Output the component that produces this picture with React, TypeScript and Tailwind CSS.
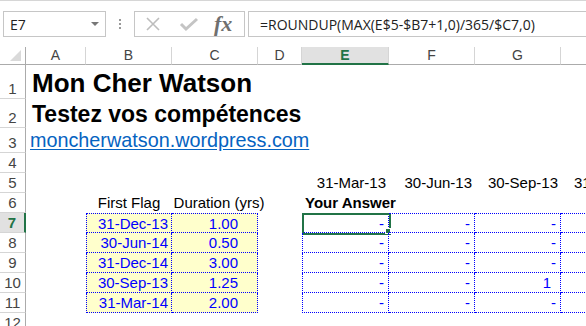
import React from "react";

const cols = ["A", "B", "C", "D", "E", "F", "G", "H"];
const rowHeights = [34, 29, 25, 20, 20, 20, 20, 20, 20, 20, 20, 20];

const flags = [
  ["31-Dec-13", "1.00"],
  ["30-Jun-14", "0.50"],
  ["31-Dec-14", "3.00"],
  ["30-Sep-13", "1.25"],
  ["31-Mar-14", "2.00"],
];

// answers E7:H11, "-" is zero in accounting format
const answers = [
  ["-", "-", "-", "-"],
  ["-", "-", "-", "-"],
  ["-", "-", "-", "-"],
  ["-", "-", "1", "-"],
  ["-", "-", "-", "-"],
];

const cell = "font-['Liberation_Sans',Arial,sans-serif] text-[15px] leading-[20px] whitespace-nowrap";

function FormulaBar() {
  return (
    <div className="flex h-[47px] items-start border-t border-[#d6d6d6] bg-white pt-[10px]">
      <div className="ml-[3px] flex h-[26px] w-[103px] items-center justify-between border border-[#c6c6c6] pl-[6px] pr-[6px] font-['Open_Sans',sans-serif] text-[14px] text-[#222]">
        <span>E7</span>
        <span className="h-0 w-0 border-x-[4px] border-t-[4px] border-x-transparent border-t-[#777]" />
      </div>
      <div className="ml-[13px] mt-[8px] flex flex-col gap-[2px]">
        <span className="h-[2px] w-[2px] bg-[#999]" />
        <span className="h-[2px] w-[2px] bg-[#999]" />
        <span className="h-[2px] w-[2px] bg-[#999]" />
      </div>
      <div className="ml-[13px] flex h-[26px] w-[111px] items-center border border-[#c6c6c6]">
        <svg width="16" height="16" viewBox="0 0 16 16" className="ml-[10px]">
          <path d="M2 2 L14 14 M14 2 L2 14" stroke="#bdbdbd" strokeWidth="1.6" fill="none" />
        </svg>
        <svg width="20" height="16" viewBox="0 0 20 16" className="ml-[18px]">
          <path d="M2 8 L7 13 L18 3" stroke="#c4c4c4" strokeWidth="3" fill="none" />
        </svg>
        <span className="ml-[15px] font-['Liberation_Serif',serif] text-[22px] font-bold italic leading-none text-[#6f6f6f]">
          fx
        </span>
      </div>
      <div className="ml-[3px] flex h-[26px] flex-1 items-center border-y border-l border-[#c6c6c6] pl-[11px] font-['Open_Sans',sans-serif] text-[14px] text-[#222]">
        =ROUNDUP(MAX(E$5-$B7+1,0)/365/$C7,0)
      </div>
    </div>
  );
}

function Sheet() {
  const rows = rowHeights.map((_, i) => i + 1);
  return (
    <div className="grid grid-cols-[26px_60px_86px_86px_44px_87px_86px_86px_86px] grid-rows-[18px_34px_29px_25px_repeat(12,20px)] bg-white">
      {/* corner */}
      <div className="relative border-b border-r border-[#ababab]">
        <span className="absolute bottom-[3px] right-[4px] h-0 w-0 border-b-[11px] border-l-[11px] border-b-[#dadada] border-l-transparent" />
      </div>
      {cols.map((c) => (
        <div
          key={c}
          className={
            "flex items-center justify-center font-['Liberation_Sans',Arial,sans-serif] text-[14px] " +
            (c === "E"
              ? "border-b-2 border-r border-b-[#217346] border-r-[#d5d5d5] bg-[#e1e1e1] font-bold text-[#217346]"
              : "border-b border-r border-b-[#ababab] border-r-[#d5d5d5] text-[#444]")
          }
        >
          {c}
        </div>
      ))}

      {rows.map((r) => (
        <React.Fragment key={r}>
          <div
            className={
              "flex items-end justify-center font-['Liberation_Sans',Arial,sans-serif] text-[15px] leading-[19px] " +
              (r === 7
                ? "border-b border-r-2 border-b-[#d5d5d5] border-r-[#217346] bg-[#e1e1e1] font-bold text-[#217346]"
                : "border-b border-r border-b-[#d5d5d5] border-r-[#ababab] text-[#444]")
            }
          >
            {r}
          </div>
          {cols.map((c) => (
            <Cell key={c + r} col={c} row={r} />
          ))}
        </React.Fragment>
      ))}
    </div>
  );
}

function Cell({ col, row }: { col: string; row: number }) {
  if (col === "A" && row === 1)
    return (
      <div className="flex items-end overflow-visible pb-[1px] pl-[6px]">
        <span className="whitespace-nowrap font-['Liberation_Sans',Arial,sans-serif] text-[26px] font-bold leading-[30px] text-black">
          Mon Cher Watson
        </span>
      </div>
    );
  if (col === "A" && row === 2)
    return (
      <div className="flex items-end overflow-visible pb-[1px] pl-[6px]">
        <span className="whitespace-nowrap font-['Liberation_Sans',Arial,sans-serif] text-[23px] font-bold leading-[26px] text-black">
          Testez vos compétences
        </span>
      </div>
    );
  if (col === "A" && row === 3)
    return (
      <div className="flex items-end overflow-visible pb-[2px] pl-[4px]">
        <span className="whitespace-nowrap font-['Liberation_Sans',Arial,sans-serif] text-[19.8px] leading-[22px] text-[#0563c1] underline underline-offset-[2px]">
          moncherwatson.wordpress.com
        </span>
      </div>
    );

  if (row === 5) {
    const dates: Record<string, string> = { E: "31-Mar-13", F: "30-Jun-13", G: "30-Sep-13", H: "31-Dec-13" };
    if (dates[col])
      return <div className={cell + " pr-[3px] text-right text-black"}>{dates[col]}</div>;
    return <div />;
  }

  if (row === 6) {
    if (col === "B") return <div className={cell + " flex justify-center text-black"}>First Flag</div>;
    if (col === "C")
      return (
        <div className={cell + " flex justify-center overflow-visible pl-[8px] text-black"}>
          <span>Duration (yrs)</span>
        </div>
      );
    if (col === "E")
      return <div className={cell + " pl-[3px] font-bold text-black"}>Your Answer</div>;
    return <div />;
  }

  if (row >= 7 && row <= 11) {
    const i = row - 7;
    const edgeT = row === 7 ? " border-t" : "";
    if (col === "B" || col === "C") {
      const val = col === "B" ? flags[i][0] : flags[i][1];
      return (
        <div
          className={
            cell +
            " border-b border-r border-dotted border-[#0000ff] bg-[#ffffcc] text-right text-[#0000ff]" +
            edgeT +
            (col === "B" ? " border-l pr-[3px]" : " pr-[19px]")
          }
        >
          {val}
        </div>
      );
    }
    if (["E", "F", "G", "H"].includes(col)) {
      const j = ["E", "F", "G", "H"].indexOf(col);
      const val = answers[i][j];
      return (
        <div
          className={
            cell +
            " relative border-b border-r border-dotted border-[#0000ff] text-right text-[#0000ff]" +
            edgeT +
            (col === "E" ? " border-l" : "") +
            (val === "-" ? " pr-[4px]" : " pr-[9px]")
          }
        >
          {val}
          {col === "E" && row === 7 && (
            <>
              <span className="absolute -left-[1px] -top-[1px] h-[22px] w-[89px] border-2 border-[#217346]" />
              <span className="absolute -bottom-[2px] -right-[3px] h-[6px] w-[6px] border border-white bg-[#217346]" />
            </>
          )}
        </div>
      );
    }
  }
  return <div />;
}

export default function App() {
  return (
    <div className="h-[326px] w-[586px] overflow-hidden bg-white">
      <FormulaBar />
      <Sheet />
    </div>
  );
}
